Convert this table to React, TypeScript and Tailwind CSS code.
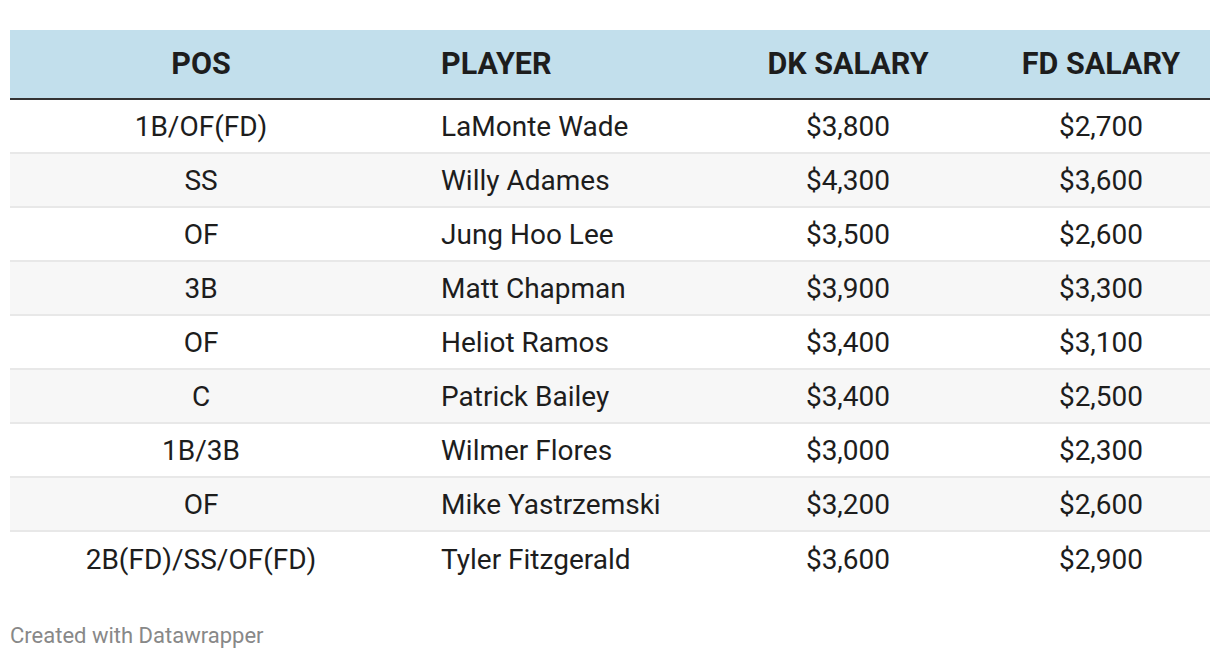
import React from "react";

const rows: [string, string, string, string][] = [
  ["1B/OF(FD)", "LaMonte Wade", "$3,800", "$2,700"],
  ["SS", "Willy Adames", "$4,300", "$3,600"],
  ["OF", "Jung Hoo Lee", "$3,500", "$2,600"],
  ["3B", "Matt Chapman", "$3,900", "$3,300"],
  ["OF", "Heliot Ramos", "$3,400", "$3,100"],
  ["C", "Patrick Bailey", "$3,400", "$2,500"],
  ["1B/3B", "Wilmer Flores", "$3,000", "$2,300"],
  ["OF", "Mike Yastrzemski", "$3,200", "$2,600"],
  ["2B(FD)/SS/OF(FD)", "Tyler Fitzgerald", "$3,600", "$2,900"],
];

const cols = "grid grid-cols-[382px_312px_288px_218px]";

export default function App() {
  return (
    <div
      className="w-[1220px] h-[660px] bg-white px-[10px] pt-[30px]"
      style={{ fontFamily: "Roboto, 'Liberation Sans', sans-serif" }}
    >
      <div className={`${cols} h-[70px] items-center bg-[#c2dfec] border-b-2 border-[#333333] text-[30.5px] leading-[36px] font-bold text-[#1d1d1d]`}>
        <div className="text-center">POS</div>
        <div className="pl-[49px]">PLAYER</div>
        <div className="text-center">DK SALARY</div>
        <div className="text-center">FD SALARY</div>
      </div>
      {rows.map((r, i) => (
        <div
          key={i}
          className={`${cols} h-[54px] pt-[2px] items-center text-[28px] leading-[34px] text-[#1d1d1d] ${
            i % 2 === 1 ? "bg-[#f7f7f7]" : "bg-white"
          } ${i < rows.length - 1 ? "border-b-2 border-[#e8e8e8]" : ""}`}
        >
          <div className="text-center">{r[0]}</div>
          <div className="pl-[49px]">{r[1]}</div>
          <div className="text-center">{r[2]}</div>
          <div className="text-center">{r[3]}</div>
        </div>
      ))}
      <div className="mt-[39px] text-[22px] leading-[22px] text-[#888888]">Created with Datawrapper</div>
    </div>
  );
}
